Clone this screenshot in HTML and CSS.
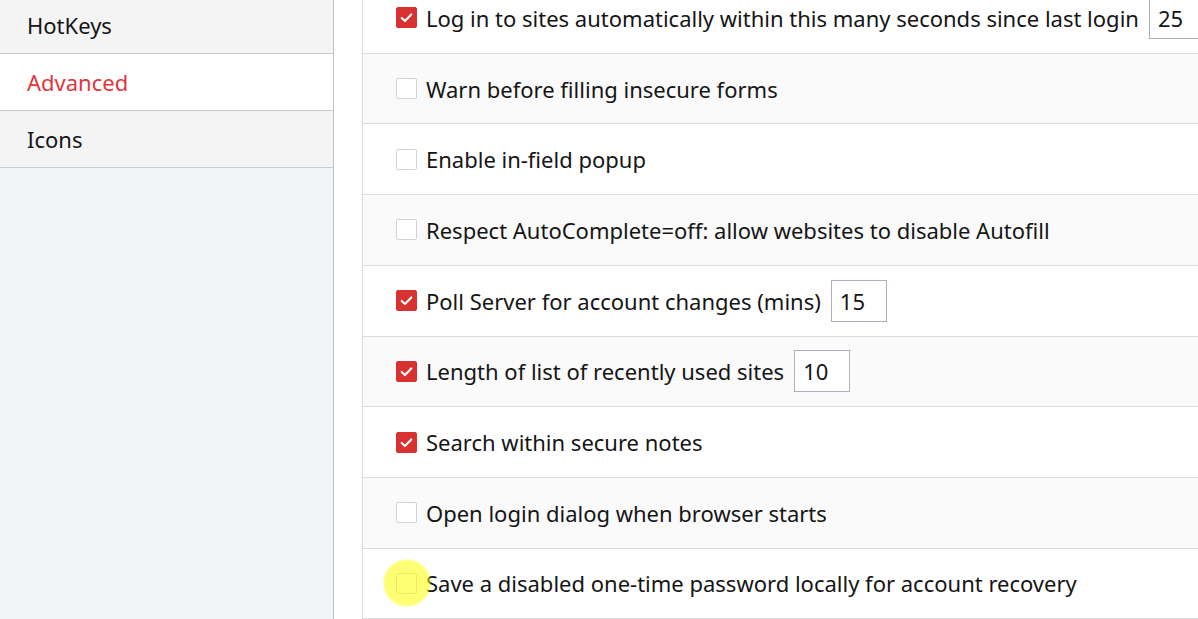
FILE: index.html
```html
<!DOCTYPE html>
<html lang="en">
<head>
<meta charset="utf-8">
<title>Preferences – Advanced</title>
<link rel="stylesheet" href="styles.css">
</head>
<body>
<div class="page">
  <nav class="sidebar">
    <div class="nav-item">HotKeys</div>
    <div class="nav-item active">Advanced</div>
    <div class="nav-item">Icons</div>
  </nav>
  <main class="settings">
    <div class="row">
      <span class="check on"><svg viewBox="0 0 22 22"><path d="M6 11.5l3.4 3.2L16 7.8"/></svg></span>
      <span class="label">Log in to sites automatically within this many seconds since last login</span>
      <span class="num">25</span>
    </div>
    <div class="row alt">
      <span class="check"></span>
      <span class="label">Warn before filling insecure forms</span>
    </div>
    <div class="row">
      <span class="check"></span>
      <span class="label">Enable in-field popup</span>
    </div>
    <div class="row alt">
      <span class="check"></span>
      <span class="label">Respect AutoComplete=off: allow websites to disable Autofill</span>
    </div>
    <div class="row">
      <span class="check on"><svg viewBox="0 0 22 22"><path d="M6 11.5l3.4 3.2L16 7.8"/></svg></span>
      <span class="label">Poll Server for account changes (mins)</span>
      <span class="num">15</span>
    </div>
    <div class="row alt">
      <span class="check on"><svg viewBox="0 0 22 22"><path d="M6 11.5l3.4 3.2L16 7.8"/></svg></span>
      <span class="label">Length of list of recently used sites</span>
      <span class="num">10</span>
    </div>
    <div class="row">
      <span class="check on"><svg viewBox="0 0 22 22"><path d="M6 11.5l3.4 3.2L16 7.8"/></svg></span>
      <span class="label">Search within secure notes</span>
    </div>
    <div class="row alt">
      <span class="check"></span>
      <span class="label">Open login dialog when browser starts</span>
    </div>
    <div class="row">
      <span class="check highlighted"><span class="click-dot"></span></span>
      <span class="label">Save a disabled one-time password locally for account recovery</span>
    </div>
  </main>
</div>
</body>
</html>
```
FILE: styles.css
```css
html, body {
  margin: 0;
  padding: 0;
  background: #ffffff;
  overflow: hidden;
}
body {
  font-family: "Noto Sans", "Open Sans", "DejaVu Sans", sans-serif;
  color: #151515;
}
.page {
  display: flex;
  height: 619px;
  overflow: hidden;
}
.sidebar {
  flex: 0 0 333px;
  width: 333px;
  margin-top: -3px;
  background: #f2f3f5;
  border-right: 1px solid #bfc2c7;
}
.nav-item {
  height: 56px;
  border-bottom: 1px solid #c7cad0;
  background: #f4f4f5;
  padding-left: 27px;
  display: flex;
  align-items: center;
  font-size: 22px;
}
.nav-item.active {
  background: #ffffff;
  color: #e0363c;
}
.settings {
  flex: 1 0 auto;
  margin-left: 28px;
  margin-top: -17px;
  border-left: 1px solid #d9d9d9;
  min-width: 0;
}
.row {
  box-sizing: border-box;
  height: 70.71px;
  border-bottom: 1px solid #dcdcdc;
  display: flex;
  align-items: center;
  padding-left: 33px;
  white-space: nowrap;
  background: #ffffff;
  font-size: 22px;
}
.row.alt {
  background: #fafafa;
}
.check {
  position: relative;
  box-sizing: border-box;
  flex: 0 0 21px;
  width: 21px;
  height: 21px;
  border: 1px solid #cfd3d9;
  border-radius: 2px;
  background: #ffffff;
  margin-right: 9px;
}
.check.on {
  background: #d7322f;
  border-color: #d7322f;
}
.check svg {
  position: absolute;
  left: -1px;
  top: -1px;
  width: 21px;
  height: 21px;
}
.check svg path {
  fill: none;
  stroke: #ffffff;
  stroke-width: 2.2;
  stroke-linecap: round;
  stroke-linejoin: round;
}
.click-dot {
  position: absolute;
  left: 50%;
  top: 50%;
  width: 46px;
  height: 46px;
  margin-left: -23px;
  margin-top: -23px;
  border-radius: 50%;
  background: rgba(255, 255, 0, 0.55);
  box-shadow: 0 0 0 1px rgba(255, 255, 0, 0.25);
}
.num {
  box-sizing: border-box;
  width: 56px;
  height: 42px;
  margin-left: 10px;
  border: 1px solid #a9b1bc;
  background: #ffffff;
  padding-left: 8px;
  display: flex;
  align-items: center;
  flex: 0 0 auto;
}
```
